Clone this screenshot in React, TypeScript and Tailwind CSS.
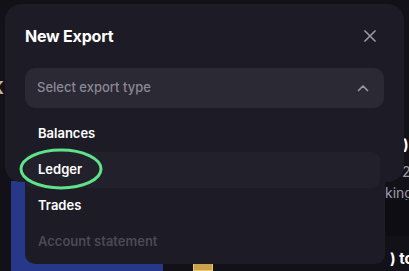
import React from "react";

export default function App() {
  const font = { fontFamily: "Inter, 'Noto Sans', sans-serif" };
  return (
    <div className="relative w-[409px] h-[271px] overflow-hidden bg-[#121118]" style={font}>
      {/* background page */}
      <div className="flex h-full">
        <div className="w-[11px] shrink-0 flex flex-col">
          <div className="h-[78px]" />
          <div className="text-[18px] font-bold text-[#b9b4ae] leading-[20px] -ml-[9px]">K</div>
        </div>
        <div className="flex flex-col w-[152px] shrink-0">
          <div className="h-[181px]" />
          <div className="flex-1 bg-[#27378a]" />
        </div>
        <div className="flex-1 flex flex-col">
          <div className="h-[262px]" />
          <div className="ml-[30px] w-[20px] h-[10px] bg-[#c9a24a] border border-[#e6c86f]" />
        </div>
      </div>
      <div className="absolute left-[403px] top-[135px] text-white font-bold text-[15px] leading-[20px]">)</div>
      <div className="absolute left-[402px] top-[163px] text-[#9c9aa6] text-[14px] leading-[18px]">2</div>
      <div className="absolute left-[385px] top-[184px] text-[#9c9aa6] text-[14px] leading-[18px] whitespace-nowrap">king</div>
      <div className="absolute left-[385px] top-[200px] w-[24px] h-[36px] bg-[#0e0d13]" />
      <div className="absolute left-[390px] top-[248px] text-white font-bold text-[15px] whitespace-nowrap">) to $</div>

      {/* modal */}
      <div className="absolute left-[5px] top-[4px] w-[399px] h-[178px] rounded-[16px] bg-[#1d1b25] px-[20px] pt-[22px]">
        <div className="flex items-center justify-between">
          <div className="text-white font-bold text-[16px] leading-[20px] tracking-[-0.2px]">New Export</div>
          <svg width="12" height="12" viewBox="0 0 12 12" className="mr-[8px]">
            <path d="M1 1L11 11M11 1L1 11" stroke="#9896a3" strokeWidth="1.7" strokeLinecap="round" />
          </svg>
        </div>
        <div className="mt-[22px] h-[40px] rounded-[10px] bg-[#2a2934] flex items-center justify-between px-[12px]">
          <span className="text-[13px] text-[#8a8896] font-medium">Select export type</span>
          <svg width="12" height="8" viewBox="0 0 12 8" className="mr-[3px]">
            <path d="M1.5 6.5L6 2L10.5 6.5" stroke="#9896a3" strokeWidth="1.7" fill="none" strokeLinecap="round" strokeLinejoin="round" />
          </svg>
        </div>
      </div>

      {/* dropdown */}
      <div className="absolute left-[25px] top-[113px] w-[360px] h-[151px] rounded-b-[10px] bg-[#1d1b25] pr-[5px] pt-[3px] flex flex-col">
        {[
          { t: "Balances", c: "text-white", bg: "" },
          { t: "Ledger", c: "text-white", bg: "bg-[#22202b]" },
          { t: "Trades", c: "text-white", bg: "" },
          { t: "Account statement", c: "text-[#4b4956] font-medium", bg: "" },
        ].map((it) => (
          <div key={it.t} className={`h-[36px] flex items-center px-[13px] rounded-[8px] ${it.bg}`}>
            <span className={`text-[13px] font-semibold ${it.c}`}>{it.t}</span>
          </div>
        ))}
      </div>

      {/* green annotation ellipse */}
      <svg className="absolute left-[19px] top-[147px]" width="86" height="44" viewBox="0 0 86 44">
        <ellipse cx="42" cy="22" rx="40" ry="19" fill="none" stroke="#5fe28a" strokeWidth="3" />
      </svg>
    </div>
  );
}
